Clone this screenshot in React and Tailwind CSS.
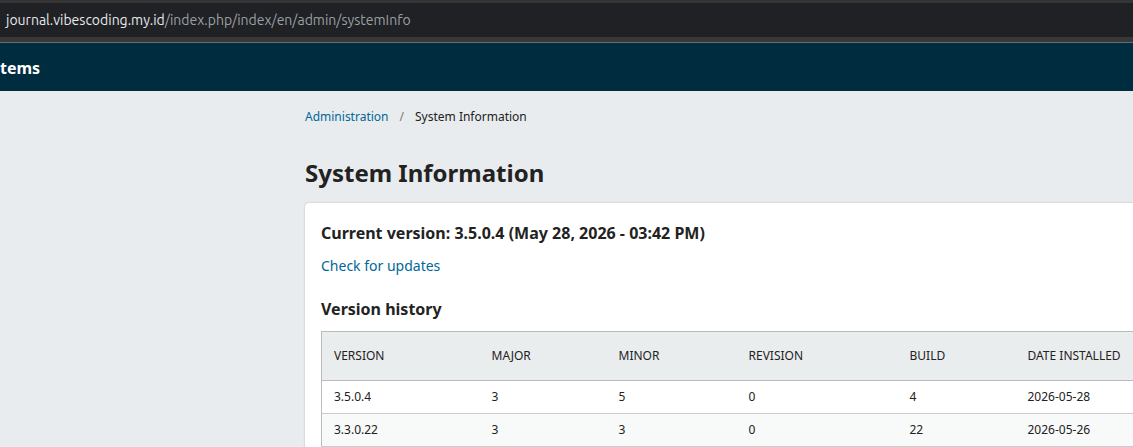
const rows = [
  { version: "3.5.0.4", major: "3", minor: "5", revision: "0", build: "4", date: "2026-05-28" },
  { version: "3.3.0.22", major: "3", minor: "3", revision: "0", build: "22", date: "2026-05-26" },
];

const cols = [
  { key: "version", label: "VERSION", w: "w-[158px]" },
  { key: "major", label: "MAJOR", w: "w-[127px]" },
  { key: "minor", label: "MINOR", w: "w-[130px]" },
  { key: "revision", label: "REVISION", w: "w-[161px]" },
  { key: "build", label: "BUILD", w: "w-[118px]" },
  { key: "date", label: "DATE INSTALLED", w: "w-[160px]" },
];

export default function App() {
  return (
    <div className="w-[1133px] h-[447px] overflow-hidden bg-[#e9ecee] font-['Noto_Sans',sans-serif]">
      {/* browser address bar */}
      <div className="h-[3px] bg-[#353535]" />
      <div className="h-[34px] bg-[#202124] flex items-center pl-[6px] pt-[1px] text-[14px] font-['Ubuntu','DejaVu_Sans',sans-serif]">
        <span className="text-[#e8eaed]">journal.vibescoding.my.id</span>
        <span className="text-[#9aa0a6]">/index.php/index/en/admin/systemInfo</span>
      </div>
      <div className="h-[6px] bg-[#383838] border-b border-[#6b6b6b]" />

      {/* app header */}
      <header className="h-[48px] bg-[#002c40] flex items-center pt-[1px]">
        <span className="text-white font-bold text-[16px]">tems</span>
      </header>

      <main className="w-[1400px] pl-[305px] pt-[18px]">
        <nav className="flex items-center gap-[11px] text-[12px] leading-[16px]">
          <span className="text-[#006798]">Administration</span>
          <span className="text-[#777]">/</span>
          <span className="text-[#222]">System Information</span>
        </nav>

        <h1 className="mt-[33px] text-[24px] leading-[30px] font-bold text-[#222]">System Information</h1>

        <section className="mt-[15px] bg-white rounded-tl-[4px] shadow-[0_0_2px_rgba(0,0,0,0.25)] pl-[16px] pt-[19px] pb-[20px]">
          <h2 className="text-[16px] leading-[22px] font-bold text-[#222]">
            Current version: 3.5.0.4 (May 28, 2026 - 03:42 PM)
          </h2>
          <a className="block mt-[12px] text-[14px] leading-[20px] text-[#006798]">Check for updates</a>

          <h3 className="mt-[22px] text-[16px] leading-[22px] font-bold text-[#222]">Version history</h3>

          <table className="mt-[11px] w-[854px] table-fixed border-collapse text-[12px] text-[#222]">
            <thead>
              <tr className="bg-[#eaedee]">
                {cols.map((c) => (
                  <th
                    key={c.key}
                    className={`${c.w} h-[49px] text-left font-normal px-[12px] border-t border-b border-[#bbbbbb] first:border-l`}
                  >
                    {c.label}
                  </th>
                ))}
              </tr>
            </thead>
            <tbody>
              {rows.map((r, i) => (
                <tr key={r.version} className={i % 2 ? "bg-[#f8f9f9]" : "bg-white"}>
                  {cols.map((c) => (
                    <td
                      key={c.key}
                      className="h-[33px] px-[12px] border-b border-[#cccccc] first:border-l first:border-l-[#bbbbbb]"
                    >
                      {r[c.key]}
                    </td>
                  ))}
                </tr>
              ))}
            </tbody>
          </table>
        </section>
      </main>
    </div>
  );
}
